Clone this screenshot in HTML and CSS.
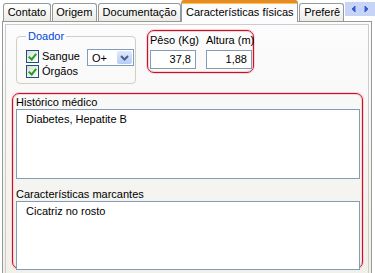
FILE: index.html
```html
<!DOCTYPE html>
<html lang="pt">
  <head>
    <meta charset="UTF-8" />
    <title>Características físicas</title>
    <link rel="stylesheet" href="styles.css">
  </head>
  <body>
    <div class="tabs">
      <div class="tab tab-contato">Contato</div>
      <div class="tab tab-origem">Origem</div>
      <div class="tab tab-doc">Documentação</div>
      <div class="tab tab-fisicas active">Características físicas</div>
      <div class="tab tab-pref">Preferê</div>
      <div class="scroller">
        <svg width="30" height="14" viewBox="0 0 30 14">
          <path d="M10 4 L7 7 L10 10 Z" fill="#3a5fcd" stroke="#3a5fcd" stroke-width="1" stroke-linejoin="round" />
          <path d="M20 4 L23 7 L20 10 Z" fill="#3a5fcd" stroke="#3a5fcd" stroke-width="1" stroke-linejoin="round" />
        </svg>
      </div>
    </div>

    <div class="panel">
      <div class="page">
        <div class="top-row">
          <fieldset class="group">
            <legend>Doador</legend>
            <div class="check-row">
              <span class="check"></span>
              <span class="check-label">Sangue</span>
              <div class="combo">
                <span class="combo-value">O+</span>
                <span class="combo-btn">
                  <svg width="9" height="6" viewBox="0 0 9 6">
                    <path d="M1 1 L4.5 4.5 L8 1" fill="none" stroke="#4d6185" stroke-width="2" />
                  </svg>
                </span>
              </div>
            </div>
            <div class="check-row">
              <span class="check"></span>
              <span class="check-label">Órgãos</span>
            </div>
          </fieldset>

          <div class="red-box measures">
            <div class="field">
              <label>Pêso (Kg)</label>
              <div class="input">37,8</div>
            </div>
            <div class="field">
              <label>Altura (m)</label>
              <div class="input">1,88</div>
            </div>
          </div>
        </div>

        <div class="red-box notes">
          <label>Histórico médico</label>
          <div class="memo">Diabetes, Hepatite B</div>
          <label>Características marcantes</label>
          <div class="memo last">Cicatriz no rosto</div>
        </div>
      </div>
    </div>
  </body>
</html>
```

FILE: styles.css
```css
/* Global */
body {
  margin: 0;
  background: #ffffff;
  font-family: "Liberation Sans", Arial, sans-serif;
  font-size: 11px;
  color: #000;
  width: 375px;
  height: 273px;
  overflow: hidden;
}

/* Tab strip */
.tabs {
  display: flex;
  align-items: flex-end;
  height: 22px;
  padding-left: 3px;
}

.tab {
  position: relative;
  height: 18px;
  margin-bottom: 1px;
  border: 1px solid #919b9c;
  border-bottom: none;
  border-radius: 3px 3px 0 0;
  background: linear-gradient(#ffffff, #ecebe6);
  line-height: 17px;
  text-align: center;
  white-space: nowrap;
  overflow: hidden;
  box-sizing: border-box;
}

.tab-contato { width: 48px; margin-right: 1px; }
.tab-origem { width: 45px; margin-right: 1px; }
.tab-doc { width: 84px; }
.tab-pref { width: 45px; text-align: left; padding-left: 4px; }

.tab.active {
  width: 117px;
  height: 22px;
  margin-bottom: 0;
  background: #fcfcfe;
  border-top: 3px solid #e68b2c;
  box-shadow: inset 0 1px 0 #ffc73c;
  line-height: 19px;
  z-index: 1;
  margin-right: 1px;
}

.scroller {
  display: flex;
  align-items: center;
  align-self: flex-start;
  margin-top: 2px;
  margin-left: 1px;
  width: 30px;
  height: 14px;
  background: #c6d4f7;
}

/* Tab page */
.panel {
  margin: -1px 0 0 2px;
  width: 370px;
  height: 260px;
  border: 1px solid #919b9c;
  background: linear-gradient(#fcfcfe, #f0efe8);
  box-sizing: border-box;
}

.page {
  margin: 2px 2px 0 2px;
  height: 260px;
  border: 1px solid #cfcdc3;
  border-bottom: none;
  padding: 5px 4px 0 6px;
  box-sizing: border-box;
}

.top-row {
  display: flex;
  align-items: flex-start;
  height: 63px;
}

/* Doador group */
.group {
  margin: 0 0 0 4px;
  width: 120px;
  height: 54px;
  padding: 0 0 0 9px;
  border: 1px solid #d0d0bf;
  border-radius: 4px;
  box-sizing: border-box;
}

.group legend {
  padding: 0 2px;
  color: #0046d5;
  line-height: 12px;
}

.check-row {
  display: flex;
  align-items: center;
  height: 14px;
  margin-top: 1px;
}

.check-row:first-of-type {
  margin-top: 7px;
}

.check {
  position: relative;
  width: 13px;
  height: 13px;
  border: 1px solid #1c5180;
  background: linear-gradient(135deg, #dcdcd7, #ffffff);
  box-sizing: border-box;
  margin-right: 3px;
}

.check::after {
  content: "";
  position: absolute;
  left: 3px;
  top: 1px;
  width: 3px;
  height: 6px;
  border: solid #21a121;
  border-width: 0 2px 2px 0;
  transform: rotate(40deg);
}

.check-label {
  width: 45px;
}

.combo {
  display: flex;
  align-items: center;
  width: 47px;
  height: 17px;
  margin-top: 3px;
  border: 1px solid #7f9db9;
  background: #fff;
  box-sizing: border-box;
}

.combo-value {
  flex: 1;
  padding-left: 4px;
}

.combo-btn {
  display: flex;
  align-items: center;
  justify-content: center;
  width: 15px;
  height: 13px;
  margin-right: 1px;
  border-radius: 2px;
  background: linear-gradient(#e0e9fd, #b6cbf6);
}

/* Red highlight boxes */
.red-box {
  border: 1px solid #c8102e;
  border-radius: 7px;
  box-shadow: 0 0 0 1px #f6d4d4, inset 0 0 0 1px #f6d4d4;
  box-sizing: border-box;
}

.measures {
  display: flex;
  gap: 10px;
  width: 107px;
  height: 43px;
  margin-left: 11px;
  padding: 3px 0 0 2px;
}

.field {
  width: 46px;
}

.field label {
  display: block;
  line-height: 13px;
  margin-bottom: 3px;
  white-space: nowrap;
}

.input {
  width: 46px;
  height: 19px;
  border: 1px solid #7f9db9;
  background: #fff;
  padding-right: 4px;
  text-align: right;
  line-height: 17px;
  box-sizing: border-box;
}

/* Notes */
.notes {
  width: 351px;
  height: 176px;
  padding: 2px 2px 0 3px;
}

.notes label {
  display: block;
  line-height: 13px;
  margin-bottom: 0;
}

.memo {
  height: 70px;
  border: 1px solid #7f9db9;
  background: #fff;
  padding: 3px 9px;
  margin-bottom: 9px;
  box-sizing: border-box;
}

.memo.last {
  height: 69px;
  margin-bottom: 0;
}
```
